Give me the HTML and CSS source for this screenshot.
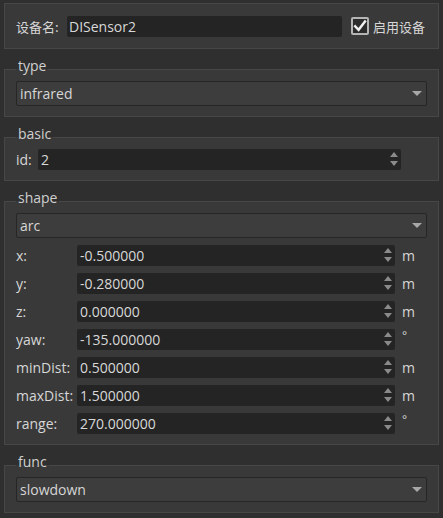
FILE: index.html
```html
<!DOCTYPE html>
<html lang="zh">
<head>
<meta charset="utf-8">
<title>Device</title>
<link rel="stylesheet" href="styles.css">
</head>
<body>
<div class="page">
  <div class="top">
    <span class="top-label cjk">设备名:</span>
    <div class="field name-field">DISensor2</div>
    <span class="check">
      <svg width="14" height="14" viewBox="0 0 14 14"><path d="M2.2 7.2 L5.6 10.8 L12 2.4" fill="none" stroke="#f0f0f0" stroke-width="2.4" stroke-linecap="square"/></svg>
    </span>
    <span class="check-label cjk">启用设备</span>
  </div>

  <fieldset class="group">
    <legend>type</legend>
    <div class="combo"><span>infrared</span><i class="caret"></i></div>
  </fieldset>

  <fieldset class="group">
    <legend>basic</legend>
    <div class="basic-row">
      <span class="lbl">id:</span>
      <div class="field spin id-spin"><span>2</span><i class="arrows"><b class="up"></b><b class="down"></b></i></div>
    </div>
  </fieldset>

  <fieldset class="group">
    <legend>shape</legend>
    <div class="combo"><span>arc</span><i class="caret"></i></div>
    <div class="grid">
      <span class="lbl">x:</span><div class="field spin"><span>-0.500000</span><i class="arrows"><b class="up"></b><b class="down"></b></i></div><span class="unit">m</span>
      <span class="lbl">y:</span><div class="field spin"><span>-0.280000</span><i class="arrows"><b class="up"></b><b class="down"></b></i></div><span class="unit">m</span>
      <span class="lbl">z:</span><div class="field spin"><span>0.000000</span><i class="arrows"><b class="up"></b><b class="down"></b></i></div><span class="unit">m</span>
      <span class="lbl">yaw:</span><div class="field spin"><span>-135.000000</span><i class="arrows"><b class="up"></b><b class="down"></b></i></div><span class="unit deg">°</span>
      <span class="lbl">minDist:</span><div class="field spin"><span>0.500000</span><i class="arrows"><b class="up"></b><b class="down"></b></i></div><span class="unit">m</span>
      <span class="lbl">maxDist:</span><div class="field spin"><span>1.500000</span><i class="arrows"><b class="up"></b><b class="down"></b></i></div><span class="unit">m</span>
      <span class="lbl">range:</span><div class="field spin"><span>270.000000</span><i class="arrows"><b class="up"></b><b class="down"></b></i></div><span class="unit deg">°</span>
    </div>
  </fieldset>

  <fieldset class="group">
    <legend>func</legend>
    <div class="combo"><span>slowdown</span><i class="caret"></i></div>
  </fieldset>
</div>
</body>
</html>
```
FILE: styles.css
```css
* { box-sizing: border-box; }
html, body { margin: 0; padding: 0; }
body {
  background: #2f2f2f;
  color: #d6d6d6;
  font-family: "Open Sans", "Noto Sans CJK SC", sans-serif;
  font-size: 14px;
  width: 443px;
  height: 518px;
  overflow: hidden;
}
.page {
  padding: 3px 4px 0 4px;
  display: flex;
  flex-direction: column;
}
.cjk { font-family: "Noto Sans CJK SC", sans-serif; font-size: 13px; }

.top {
  height: 46px;
  background: #393939;
  border: 1px solid #474747;
  display: flex;
  align-items: center;
  padding: 0 11px;
}
.top-label { width: 51px; }
.field {
  background: #242424;
  border-radius: 2px;
  height: 21px;
  display: flex;
  align-items: center;
  color: #d8d8d8;
  position: relative;
}
.name-field { width: 275px; padding-left: 2px; }
.check {
  margin-left: 9px;
  width: 18px;
  height: 18px;
  border: 2px solid #b4b4b4;
  border-radius: 2px;
  background: #2b2b2b;
  display: flex;
  align-items: center;
  justify-content: center;
}
.check svg { display: block; }
.check-label { margin-left: 4px; }

.group {
  margin: 9px 0 0 0;
  padding: 0 11px 10px 11px;
  background: #393939;
  border: 1px solid #474747;
  min-width: 0;
}
.group legend {
  padding: 0 2px 7px 2px;
  line-height: 16px;
  color: #cfcfcf;
}
.combo {
  height: 25px;
  background: #3d3d3d;
  border: 1px solid #262626;
  border-radius: 2px;
  display: flex;
  align-items: center;
  justify-content: space-between;
  padding: 0 4px 0 3px;
}
.caret {
  width: 0; height: 0;
  border-left: 5px solid transparent;
  border-right: 5px solid transparent;
  border-top: 5px solid #a8a8a8;
}
.basic-row {
  display: flex;
  align-items: center;
}
.basic-row .lbl { width: 22px; }
.spin { padding-left: 3px; }
.id-spin { width: 363px; }
.arrows {
  position: absolute;
  right: 2px;
  top: 3px;
  bottom: 4px;
  width: 9px;
  display: flex;
  flex-direction: column;
  justify-content: space-between;
}
.arrows b { display: block; width: 0; height: 0; border-left: 4.5px solid transparent; border-right: 4.5px solid transparent; }
.arrows .up { border-bottom: 5px solid #8a8a8a; }
.arrows .down { border-top: 5px solid #8a8a8a; }

.grid {
  margin-top: 7px;
  display: grid;
  grid-template-columns: 61px 318px auto;
  row-gap: 7px;
  align-items: center;
}
.unit { margin-left: 7px; }
.unit.deg { align-self: start; line-height: 14px; font-size: 12px; }
```
